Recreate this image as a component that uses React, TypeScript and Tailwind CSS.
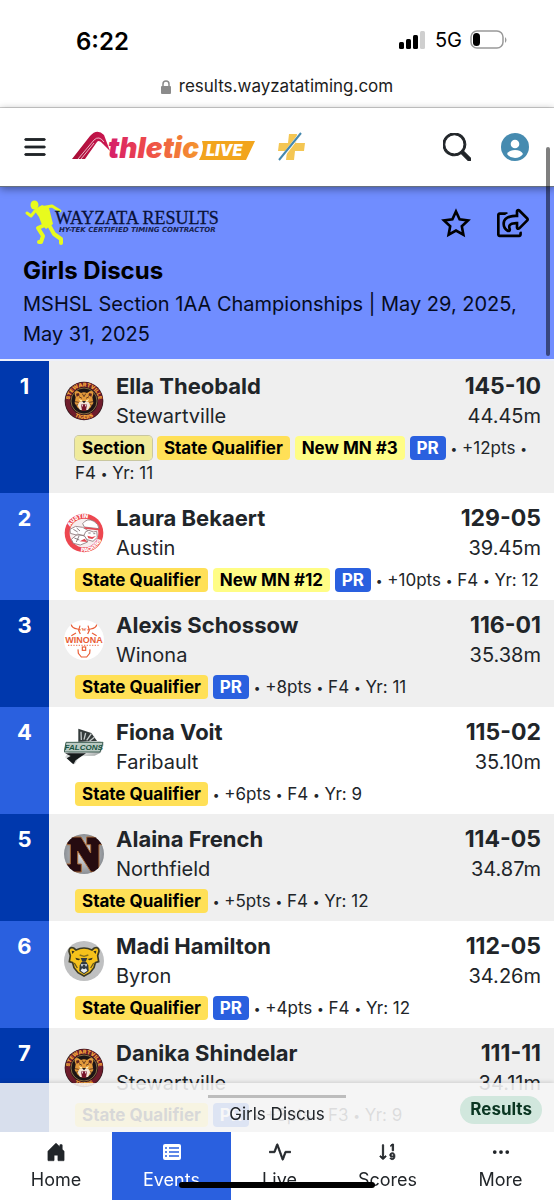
import React from "react";
import { BsActivity, BsHouseDoorFill, BsList, BsSearch, BsSortNumericDown, BsThreeDots } from "react-icons/bs";
import { FaRegShareSquare } from "react-icons/fa";

type School = "Stewartville" | "Austin" | "Winona" | "Faribault" | "Northfield" | "Byron";
type Tag = { kind: "section" | "qualifier" | "record" | "pr"; text: string };
type Result = {
  place: number;
  name: string;
  school: School;
  mark: string;
  metric: string;
  tags: Tag[];
  meta: string[];
};

const qualifier: Tag = { kind: "qualifier", text: "State Qualifier" };
const pr: Tag = { kind: "pr", text: "PR" };

const results: Result[] = [
  { place: 1, name: "Ella Theobald", school: "Stewartville", mark: "145-10", metric: "44.45m", tags: [{ kind: "section", text: "Section" }, qualifier, { kind: "record", text: "New MN #3" }, pr], meta: ["+12pts", "F4", "Yr: 11"] },
  { place: 2, name: "Laura Bekaert", school: "Austin", mark: "129-05", metric: "39.45m", tags: [qualifier, { kind: "record", text: "New MN #12" }, pr], meta: ["+10pts", "F4", "Yr: 12"] },
  { place: 3, name: "Alexis Schossow", school: "Winona", mark: "116-01", metric: "35.38m", tags: [qualifier, pr], meta: ["+8pts", "F4", "Yr: 11"] },
  { place: 4, name: "Fiona Voit", school: "Faribault", mark: "115-02", metric: "35.10m", tags: [qualifier], meta: ["+6pts", "F4", "Yr: 9"] },
  { place: 5, name: "Alaina French", school: "Northfield", mark: "114-05", metric: "34.87m", tags: [qualifier], meta: ["+5pts", "F4", "Yr: 12"] },
  { place: 6, name: "Madi Hamilton", school: "Byron", mark: "112-05", metric: "34.26m", tags: [qualifier, pr], meta: ["+4pts", "F4", "Yr: 12"] },
  { place: 7, name: "Danika Shindelar", school: "Stewartville", mark: "111-11", metric: "34.11m", tags: [qualifier, pr], meta: ["+3pts", "F3", "Yr: 9"] },
];

const tagStyles: Record<Tag["kind"], string> = {
  section: "bg-[#f0eb9c] text-black ring-1 ring-[#c9c79f]",
  qualifier: "bg-[#ffe057] text-black",
  record: "bg-[#fffd85] text-black",
  pr: "bg-[#2a60df] text-white",
};

function SchoolLogo({ school, id }: { school: School; id: number }) {
  const common = { viewBox: "0 0 120 120", className: "size-10 shrink-0", role: "img", "aria-label": `${school} logo` };
  switch (school) {
    case "Stewartville":
      return (
        <svg {...common}>
          <defs>
            <path id={`top${id}`} d="M17 60A43 43 0 0 1 103 60" />
            <path id={`bottom${id}`} d="M6 60A54 54 0 0 0 114 60" />
          </defs>
          <circle cx="60" cy="60" r="58" fill="#2a1518" />
          <circle cx="60" cy="60" r="49" fill="none" stroke="#6e1c2c" strokeWidth="14" />
          <circle cx="60" cy="60" r="39" fill="#1c1415" stroke="#b99a5c" strokeWidth="2" />
          <text fontFamily="Inter, sans-serif" fontSize="16" fontWeight="900" fill="#f0a53a">
            <textPath href={`#top${id}`} startOffset="50%" textAnchor="middle">STEWARTVILLE</textPath>
          </text>
          <text fontFamily="Inter, sans-serif" fontSize="16" fontWeight="900" fill="#f0a53a">
            <textPath href={`#bottom${id}`} startOffset="50%" textAnchor="middle">TIGERS</textPath>
          </text>
          <path d="M32 40q0-13 11-9l8 5q9-4 18 0l8-5q11-4 11 9l-3 9 3 17-9 14-10 8H51l-10-8-9-14 3-17z" fill="#e39a3b" />
          <path d="M36 38l8-2 3 7-9 4zM84 38l-8-2-3 7 9 4z" fill="#5a2320" />
          <path d="M55 38l5 9 5-9M45 47l9 5M75 47l-9 5M33 62l11 2M87 62l-11 2M36 73l10-3M84 73l-10-3" stroke="#4d2a1c" strokeWidth="2.5" fill="none" />
          <path d="M44 55l11 3-4 5zM76 55l-11 3 4 5z" fill="#fff3b8" />
          <path d="M46 64l14-5 14 5 5 9-7 14H48l-7-14z" fill="#f2e5d7" />
          <path d="M54 60h12l-6 7z" fill="#21191c" />
          <path d="M51 70h18l-3 19H54z" fill="#79152a" />
          <path d="M52 70l3 8 2-7M68 70l-3 8-2-7" fill="#fff" />
        </svg>
      );
    case "Austin":
      return (
        <svg {...common}>
          <defs>
            <path id={`top${id}`} d="M15 60A45 45 0 0 1 105 60" />
            <path id={`bottom${id}`} d="M4 60A56 56 0 0 0 116 60" />
          </defs>
          <circle cx="60" cy="60" r="58" fill="#ed4750" />
          <circle cx="60" cy="60" r="43" fill="#f7eeee" />
          <text fontFamily="Inter, sans-serif" fontSize="16" fontWeight="900" fill="#fff">
            <textPath href={`#top${id}`} startOffset="36%" textAnchor="middle">AUSTIN</textPath>
          </text>
          <text fontFamily="Inter, sans-serif" fontSize="16" fontWeight="900" fill="#fff">
            <textPath href={`#bottom${id}`} startOffset="66%" textAnchor="middle">PACKERS</textPath>
          </text>
          <path d="M56 32q14-19 34-7 14 8 15 22l-44-5zM18 49l17-9 21 3 15 9-9 15-25-1-18-5zM22 79l19-16 23 7 7 17-22 9-21-5z" fill="#fff" stroke="#8c777a" strokeWidth="2.5" />
          <path d="M61 42l43 5-3 5-39-5z" fill="#e44750" />
          <path d="M65 56l10-4 13 5 10-2 2 18-13 12-18-5-9-13z" fill="#fff" stroke="#8c777a" strokeWidth="2.5" />
          <path d="M70 68l14 4 12-3-11 9-12-2zM47 85l15-8 8 10z" fill="#e44750" />
          <path d="M28 49l13 8M38 45l10 9M31 75l15 6M45 69l-8 18M73 60h7m8 2h6" stroke="#75676b" strokeWidth="2.5" fill="none" />
        </svg>
      );
    case "Winona":
      return (
        <svg {...common}>
          <circle cx="60" cy="60" r="60" fill="#fff" />
          <g fill="none" stroke="#e95d35" strokeWidth="3.5">
            <path d="M22 14q1 10 18 13l10 3M98 14q-1 10-18 13l-10 3M48 17l-4 14 5 11M72 17l4 14-5 11M36 39l-14 8M84 39l14 8" />
            <path d="M42 88l1 12 9 11h16l9-11 1-12" />
            <rect x="55" y="81" width="10" height="10" />
          </g>
          <text x="60" y="32" textAnchor="middle" fontFamily="Liberation Serif, serif" fontSize="15" fontWeight="700" fill="#e95d35">W</text>
          <text x="60" y="69" textAnchor="middle" fontFamily="Liberation Sans, sans-serif" fontSize="27" fontWeight="700" fill="#e95d35">WINONA</text>
          <path d="M12 76h96" stroke="#e95d35" strokeWidth="4" strokeDasharray="4 4" opacity=".7" />
        </svg>
      );
    case "Faribault":
      return (
        <svg {...common}>
          <defs>
            <linearGradient id="falcon" x1="0" x2="1" y2="1">
              <stop stopColor="#b7bdbc" />
              <stop offset=".5" stopColor="#e1e3e3" />
              <stop offset="1" stopColor="#555d5c" />
            </linearGradient>
          </defs>
          <path d="M43 5L82 18l17 24-56 4z" fill="#343b3b" />
          <path d="M52 39l-1-25M60 38l5-20M68 40l14-20M77 42l15-12" stroke="#c5caca" strokeWidth="4" />
          <path d="M8 46l100-4 12 9-10 26-18 9-45 2-15 24L3 91l12-16-14-1z" fill="url(#falcon)" />
          <path d="M3 79h63L35 100l-7 12L8 94l12-7z" fill="#171b1c" />
          <path d="M6 46h111l-9 29H1z" fill="#b9c9c2" stroke="#3f5f54" strokeWidth="3" />
          <text x="59" y="69" textAnchor="middle" fontFamily="Liberation Sans, sans-serif" fontSize="24" fontStyle="italic" fontWeight="700" fill="#175240">FALCONS</text>
        </svg>
      );
    case "Northfield":
      return (
        <svg {...common}>
          <defs>
            <clipPath id="northfieldClip"><circle cx="60" cy="60" r="60" /></clipPath>
            <radialGradient id="northfieldBg"><stop stopColor="#e5e7eb" /><stop offset="1" stopColor="#8b8f94" /></radialGradient>
          </defs>
          <g clipPath="url(#northfieldClip)">
            <rect width="120" height="120" fill="url(#northfieldBg)" />
            <path d="M9 9h42l29 48V32H68V9h49v23h-12v82H81L41 51v39h11v24H6V90h13V32H9z" fill="#260b10" stroke="#a86936" strokeWidth="3" />
          </g>
        </svg>
      );
    case "Byron":
      return (
        <svg {...common}>
          <circle cx="60" cy="60" r="60" fill="#bfc0c1" />
          <path d="M15 31q0-14 14-10l7 6q24-12 48 0l7-6q14-4 14 10l-4 13 3 18-10 3-4 15-12 15-18 10-18-10-12-15-4-15-10-3 3-18z" fill="#f6c21b" stroke="#3c3a25" strokeWidth="5" />
          <path d="M23 29l9 2-7 8M97 29l-9 2 7 8" fill="#36331e" />
          <path d="M34 50l15 4-5 4-7-2zM86 50l-15 4 5 4 7-2z" fill="#36331e" />
          <path d="M47 42l13 4 13-4" fill="none" stroke="#86701c" strokeWidth="4" />
          <path d="M50 51h20l-5 11H55zM47 73l6-10h14l6 10 1 17-14 10-14-10z" fill="#303a42" />
          <path d="M50 70l4 8 3-7h6l3 7 4-8M50 89l4-7 6 3 6-3 4 7-10 7z" fill="#e7edf0" />
          <path d="M31 66l9 15M89 66l-9 15" stroke="#65561d" strokeWidth="4" />
        </svg>
      );
  }
}

function AthleticLiveLogo() {
  return (
    <svg viewBox="0 0 184 32" className="h-8 w-46 shrink-0 overflow-visible" role="img" aria-label="AthleticLIVE">
      <defs>
        <linearGradient id="brand" gradientUnits="userSpaceOnUse" x1="34" x2="130" y1="0" y2="0">
          <stop stopColor="#d31a6c" />
          <stop offset=".42" stopColor="#ee4a4b" />
          <stop offset="1" stopColor="#f59b2c" />
        </linearGradient>
        <linearGradient id="peak" x1="0" x2="1"><stop stopColor="#a60d35" /><stop offset="1" stopColor="#cf1853" /></linearGradient>
      </defs>
      <path d="M0 28L18 5Q25-3 32 4L38 20L31 13Q27 8 25 11L13 28z" fill="url(#peak)" />
      <path d="M6 28L22 9Q27 4 32 11M9 28L22 12" fill="none" stroke="#fff" strokeWidth=".7" />
      <text x="36" y="27" fontFamily="Inter, sans-serif" fontSize="28" fontWeight="900" fontStyle="italic" fill="url(#brand)">thletic</text>
      <path d="M130 10h53l-9 19h-47q6-10 3-19z" fill="#f2a51d" />
      <text x="134" y="25" fontFamily="Inter, sans-serif" fontSize="16" fontWeight="900" fontStyle="italic" fill="#fff">LIVE</text>
    </svg>
  );
}

function WayzataLogo() {
  return (
    <svg viewBox="0 0 196 46" className="h-[46px] w-[196px] shrink-0 overflow-visible" role="img" aria-label="Wayzata Results">
      <g fill="none" stroke="#e8fb1e" strokeLinecap="round" strokeLinejoin="round">
        <path d="M17 9L29 7L37 12" strokeWidth="3" />
        <path d="M12 12L8 17L4 14" strokeWidth="3" />
        <path d="M24 25L15 29L20 37L18 43L16 43" strokeWidth="4" />
        <path d="M26 26L31 35L38 40L38 44" strokeWidth="4" />
      </g>
      <path d="M11 11L19 6L26 9L30 25L23 30L19 26L16 18z" fill="#e8fb1e" />
      <ellipse cx="11.500" cy="6" rx="4" ry="4.500" fill="#e8fb1e" />
      <text x="32" y="25" fontFamily="Liberation Serif, serif" fontSize="18" fill="#0a1236" stroke="#0a1236" strokeWidth=".3">WAYZATA RESULTS</text>
      <text x="36" y="33" fontFamily="DejaVu Sans, sans-serif" fontSize="7" fontWeight="700" fontStyle="italic" fill="#17224d">HY-TEK CERTIFIED TIMING CONTRACTOR</text>
    </svg>
  );
}

function StatusBar() {
  return (
    <div className="flex h-[60px] items-end justify-between pr-[46px] pl-[76px] text-black">
      <span className="pb-1 text-2xl leading-7 font-semibold">6:22</span>
      <div className="flex h-10 items-center gap-2">
        <svg viewBox="0 0 28 18" className="h-[18px] w-7" aria-label="Signal strength">
          <rect y="11" width="5" height="7" rx="1.500" />
          <rect x="7" y="8" width="5" height="10" rx="1.500" />
          <rect x="14" y="4" width="5" height="14" rx="1.500" />
          <rect x="21" width="5" height="18" rx="1.500" fill="#cfcfcf" />
        </svg>
        <span className="text-xl">5G</span>
        <svg viewBox="0 0 38 20" className="h-5 w-[38px]" aria-label="Battery low">
          <rect x="1" y="1" width="32" height="17" rx="6" fill="none" stroke="#999" strokeWidth="1.500" />
          <rect x="3" y="3" width="7" height="13" rx="3.500" />
          <path d="M35 7q3 3 0 6z" fill="#999" />
        </svg>
      </div>
    </div>
  );
}

function ResultRow({ result }: { result: Result }) {
  const odd = result.place % 2 === 1;
  return (
    <tbody className={odd ? "bg-[#efefef]" : "bg-white"}>
      <tr>
        <th scope="row" rowSpan={2} className={`w-[49px] pt-2.5 align-top text-[22px] leading-[30px] font-bold text-white ${odd ? "bg-[#0038ad]" : "bg-[#2a60df]"}`}>
          {result.place}
        </th>
        <td className="pt-2.5 pl-[15px]">
          <div className="flex items-center gap-3">
            <SchoolLogo school={result.school} id={result.place} />
            <div>
              <a href="#athlete" className="block text-[22px] leading-[30px] font-bold">{result.name}</a>
              <a href="#team" className="block text-xl leading-[30px]">{result.school}</a>
            </div>
          </div>
        </td>
        <td className="pt-2.5 pr-[13px] text-right">
          <div className="text-[23px] leading-[30px] font-bold">{result.mark}</div>
          <div className="text-xl leading-[30px]">{result.metric}</div>
        </td>
      </tr>
      <tr>
        <td colSpan={2} className="pt-[5px] pr-3 pb-[7px] pl-[26px] text-[17px] leading-[25px]">
          {result.tags.map((tag) => (
            <React.Fragment key={tag.text}>
              <span className={`rounded-[4px] px-[7px] py-0.5 font-bold whitespace-nowrap ${tagStyles[tag.kind]}`}>{tag.text}</span>{" "}
            </React.Fragment>
          ))}
          {result.meta.map((item) => (
            <React.Fragment key={item}>
              <span className="align-[1px] text-xs leading-none">•</span> <span className="whitespace-nowrap">{item}</span>{" "}
            </React.Fragment>
          ))}
        </td>
      </tr>
    </tbody>
  );
}

const navItems = [
  { label: "Home", icon: <BsHouseDoorFill className="size-5" strokeWidth="0.4" /> },
  {
    label: "Events",
    icon: (
      <svg viewBox="0 0 18 16" className="h-4 w-[18px]" aria-hidden="true">
        <rect width="18" height="16" rx="2" fill="currentColor" />
        <path d="M2 4h2M2 8h2M2 12h2M6 4h10M6 8h10M6 12h10" stroke="#2a60df" strokeWidth="1.600" />
      </svg>
    ),
  },
  { label: "Live", icon: <BsActivity className="size-[22px]" strokeWidth="0.6" /> },
  { label: "Scores", icon: <BsSortNumericDown className="size-5" strokeWidth="0.7" /> },
  { label: "More", icon: <BsThreeDots className="size-5" /> },
];

export default function App() {
  return (
    <div className="min-h-screen bg-white pb-12 font-[Inter,'Noto_Sans',sans-serif] text-[#212529]">
      <StatusBar />
      <div className="flex h-12 items-center justify-center gap-2 border-b border-[#d2d2d2] pt-1.5 text-[17px] text-[#1c1c1c]">
        <svg viewBox="0 0 10 14" className="h-3.5 w-2.5" aria-hidden="true">
          <rect y="6" width="10" height="8" rx="1" fill="#8b8b8b" />
          <path d="M2 6V4q0-3 3-3t3 3v2" fill="none" stroke="#8b8b8b" strokeWidth="1.500" />
        </svg>
        results.wayzatatiming.com
      </div>

      <header className="relative z-10 flex h-[79px] items-center border-b border-[#667080] pr-[25px] pl-5 shadow-[0_2px_8px_rgba(0,0,0,0.4)]">
        <button type="button" aria-label="Menu"><BsList className="size-[30px]" strokeWidth="0.5" /></button>
        <a href="#home" className="ml-[22px]"><AthleticLiveLogo /></a>
        <a href="#plus" className="ml-[22px]" aria-label="Plus">
          <svg viewBox="0 0 28 30" className="h-[30px] w-7">
            <path d="M11 2h8l-1 9h9l-1 8h-9l-1 9H8l1-9H0l1-8h9z" fill="#f4c653" />
            <path d="M2 28L23 1" stroke="#fff" strokeWidth="3" />
            <path d="M1 28L23 1" stroke="#4588ae" strokeWidth="2" />
          </svg>
        </a>
        <button type="button" aria-label="Search" className="ml-auto"><BsSearch className="size-7" strokeWidth="0.6" /></button>
        <button type="button" aria-label="Account" className="ml-[30px]">
          <svg viewBox="0 0 28 28" className="size-7">
            <circle cx="14" cy="14" r="14" fill="#468bb0" />
            <circle cx="14" cy="11" r="4.300" fill="#fff" />
            <path d="M6 21Q8 17 14 17T22 21Q19 25 14 25T6 21z" fill="#fff" />
          </svg>
        </button>
      </header>

      <section className="border-b-2 border-[#edf0fb] bg-[#708dff] px-[23px] pt-3 pb-2.5 text-[#050b21]">
        <div className="flex items-center justify-between">
          <WayzataLogo />
          <div className="flex items-center gap-[26px] pt-0.5 pr-0.5 text-black">
            <button type="button" aria-label="Add to favorites">
              <svg viewBox="0 0 30 30" className="size-[30px]" fill="none" stroke="currentColor" strokeWidth="2.600">
                <path d="M15 3.500L18.600 11.400L27 12.400L20.800 18.300L22.400 26.700L15 22.600L7.600 26.700L9.200 18.300L3 12.400L11.400 11.400z" />
              </svg>
            </button>
            <button type="button" aria-label="Share"><FaRegShareSquare className="size-8" /></button>
          </div>
        </div>
        <h1 className="mt-3 text-2xl leading-7 font-bold text-black">Girls Discus</h1>
        <p className="mt-1 text-xl leading-[30px]">MSHSL Section 1AA Championships | May 29, 2025, May 31, 2025</p>
      </section>

      <main>
        <table className="w-full border-collapse" aria-label="Girls Discus results">
          {results.map((result) => <ResultRow key={result.place} result={result} />)}
        </table>
      </main>

      <div className="absolute top-[147px] right-1 z-20 h-[209px] w-1 rounded-full bg-black/50" />

      <footer className="fixed inset-x-0 bottom-0 z-30">
        <div className="grid h-[49px] grid-cols-[1fr_auto_1fr] items-center bg-[#f6f6f6]/88 px-3 shadow-[0_0_5px_rgba(0,0,0,0.2)]">
          <div className="col-start-2 flex h-full w-[138px] flex-col items-center pt-3">
            <div className="h-[3px] w-full bg-[#bdbdbd]" />
            <span className="pt-0.5 text-[17px] leading-7">Girls Discus</span>
          </div>
          <button type="button" className="mt-1 h-7 justify-self-end rounded-full bg-[#d1e7dd] px-2.5 text-[17px] font-bold text-[#0a3622]">Results</button>
        </div>
        <nav className="relative grid h-[68px] grid-cols-[112fr_119fr_97fr_119fr_107fr] bg-white">
          {navItems.map(({ label, icon }) => (
            <a key={label} href={`#${label.toLowerCase()}`} className={`flex flex-col items-center pt-2 text-lg ${label === "Events" ? "bg-[#2a60df] text-white" : ""}`}>
              <span className="flex h-6 items-center">{icon}</span>
              <span className="leading-8">{label}</span>
            </a>
          ))}
          <div className="absolute bottom-3 left-1/2 h-1.5 w-[196px] -translate-x-1/2 rounded-full bg-black" />
        </nav>
      </footer>
    </div>
  );
}
